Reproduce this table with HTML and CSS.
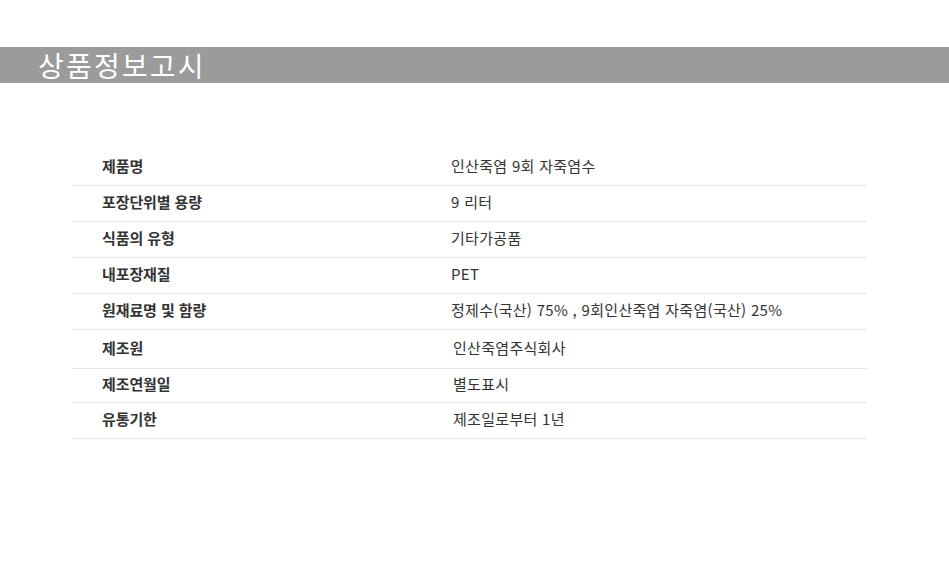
FILE: index.html
```html
<!DOCTYPE html>
<html lang="ko">
<head>
<meta charset="utf-8">
<title>상품정보고시</title>
<link rel="stylesheet" href="styles.css">
</head>
<body>
<div class="page">
  <h1 class="title-bar"><span class="title">상품정보고시</span></h1>
  <div class="info">
    <div class="row"><div class="label">제품명</div><div class="value">인산죽염 9회 자죽염수</div></div>
    <div class="row"><div class="label">포장단위별 용량</div><div class="value">9 리터</div></div>
    <div class="row"><div class="label">식품의 유형</div><div class="value">기타가공품</div></div>
    <div class="row"><div class="label">내포장재질</div><div class="value">PET</div></div>
    <div class="row"><div class="label">원재료명 및 함량</div><div class="value">정제수(국산) 75% , 9회인산죽염 자죽염(국산) 25%</div></div>
    <div class="row tall"><div class="label">제조원</div><div class="value shift">인산죽염주식회사</div></div>
    <div class="row short"><div class="label">제조연월일</div><div class="value shift">별도표시</div></div>
    <div class="row"><div class="label">유통기한</div><div class="value shift">제조일로부터 1년</div></div>
  </div>
</div>
</body>
</html>
```
FILE: styles.css
```css
html, body {
  margin: 0;
  padding: 0;
  background: #ffffff;
}
.page {
  padding-top: 47px;
  font-family: "Noto Sans CJK KR", "Noto Sans", sans-serif;
  color: #333333;
}
.title-bar {
  margin: 0;
  height: 36px;
  background: #9b9b9b;
  display: flex;
  align-items: center;
  padding-left: 38px;
}
.title {
  color: #ffffff;
  font-size: 28px;
  font-weight: 400;
  letter-spacing: 2.2px;
  line-height: 36px;
}
.info {
  margin: 67px 82px 0 72px;
}
.row {
  display: grid;
  grid-template-columns: 379px 1fr;
  height: 31px;
  padding-bottom: 4px;
  align-items: center;
  border-bottom: 1px solid #e6e6e6;
}
.row.tall { height: 34px; }
.row.short { height: 29px; }
.label {
  padding-left: 30px;
  font-size: 15px;
  font-weight: 700;
  color: #333333;
  letter-spacing: -0.1px;
}
.value {
  font-size: 15px;
  color: #333333;
  letter-spacing: 0.3px;
}
.value.shift { padding-left: 2px; }
```
